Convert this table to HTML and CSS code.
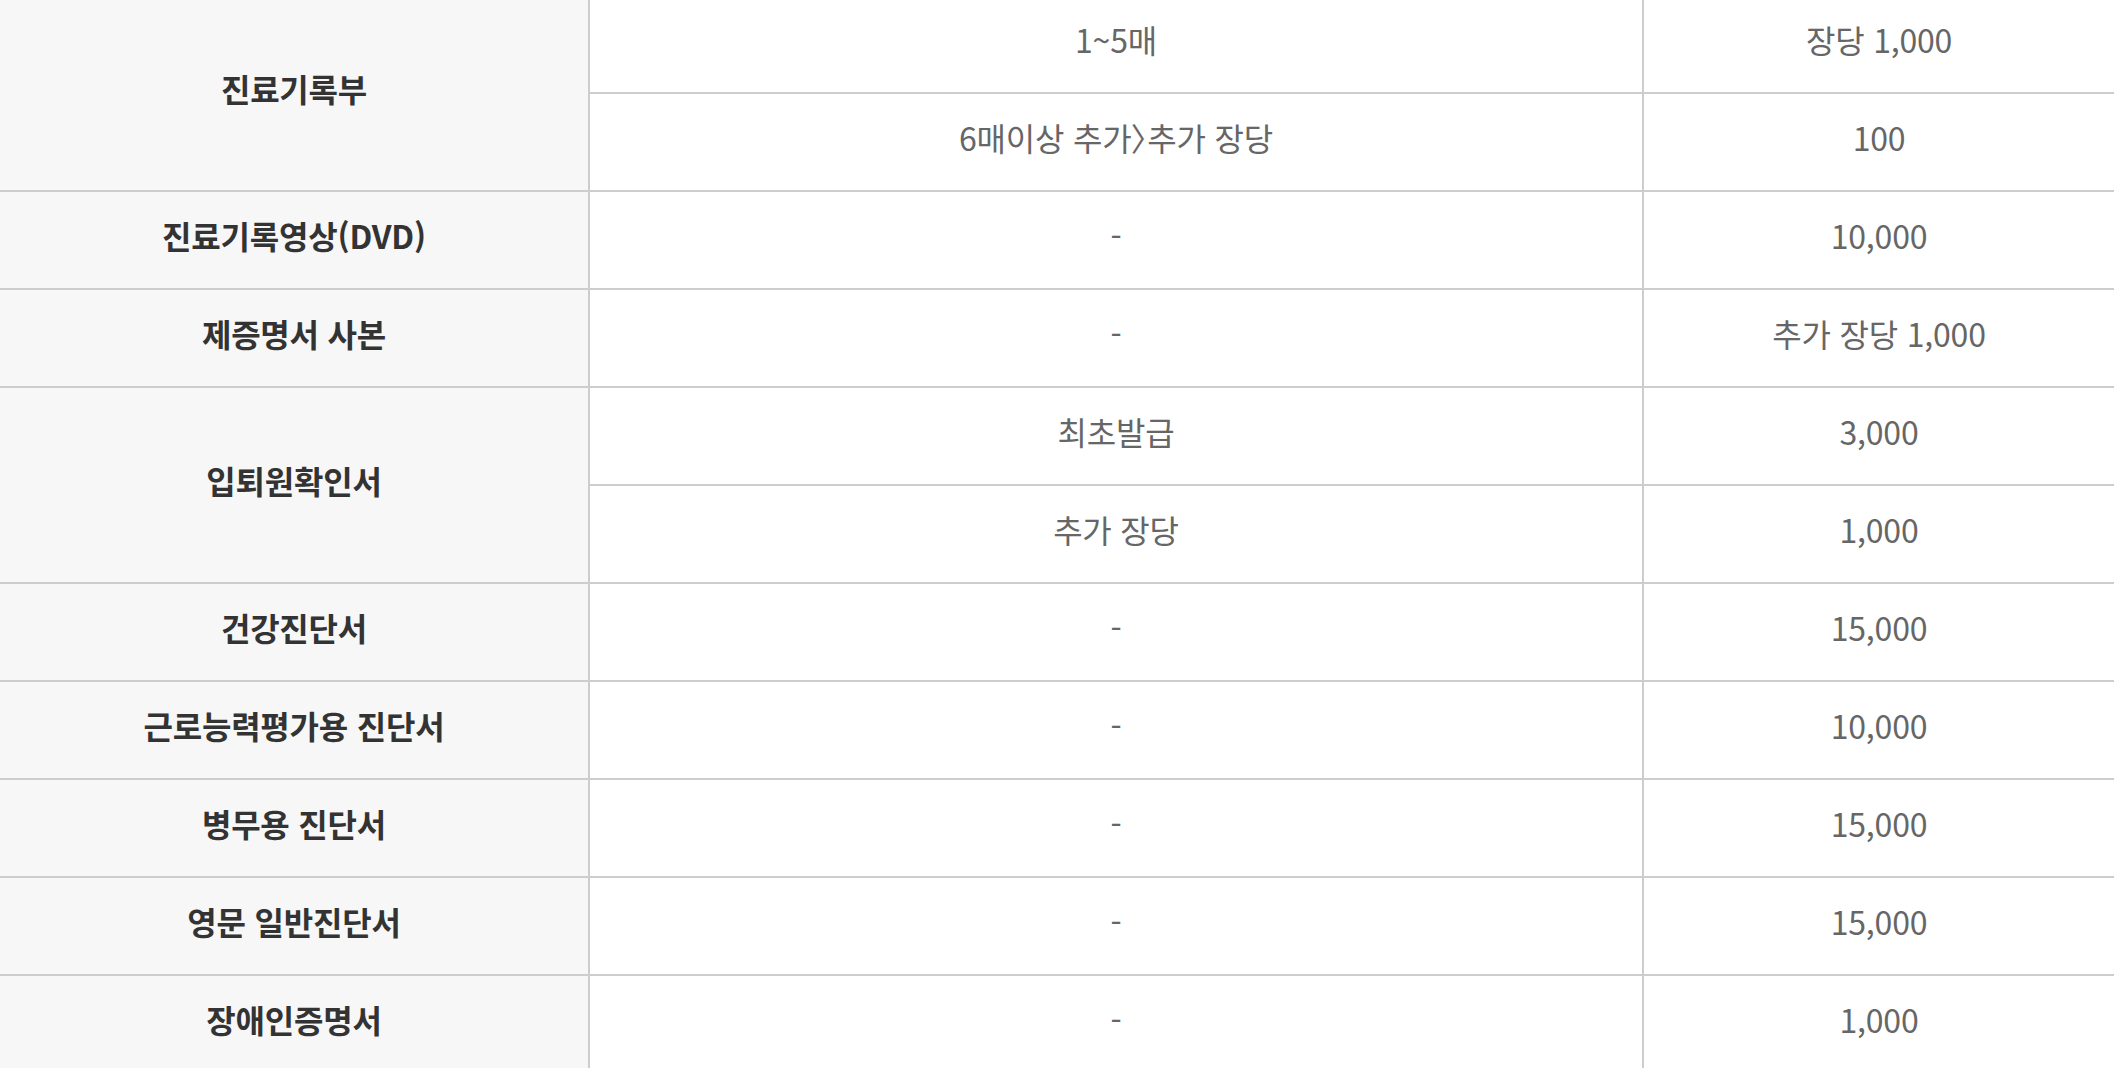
FILE: index.html
```html
<!DOCTYPE html>
<html lang="ko">
<head>
<meta charset="utf-8">
<title>제증명 수수료</title>
<link rel="stylesheet" href="styles.css">
</head>
<body>
<table class="fee-table">
  <colgroup>
    <col class="col-name">
    <col class="col-cond">
    <col class="col-price">
  </colgroup>
  <tbody>
    <tr>
      <th rowspan="2">진료기록부</th>
      <td class="cond">1~5매</td>
      <td class="price">장당 1,000</td>
    </tr>
    <tr>
      <td class="cond">6매이상 추가<span class="bracket">〉</span>추가 장당</td>
      <td class="price">100</td>
    </tr>
    <tr>
      <th>진료기록영상(DVD)</th>
      <td class="cond">-</td>
      <td class="price">10,000</td>
    </tr>
    <tr>
      <th>제증명서 사본</th>
      <td class="cond">-</td>
      <td class="price">추가 장당 1,000</td>
    </tr>
    <tr>
      <th rowspan="2">입퇴원확인서</th>
      <td class="cond">최초발급</td>
      <td class="price">3,000</td>
    </tr>
    <tr>
      <td class="cond">추가 장당</td>
      <td class="price">1,000</td>
    </tr>
    <tr>
      <th>건강진단서</th>
      <td class="cond">-</td>
      <td class="price">15,000</td>
    </tr>
    <tr>
      <th>근로능력평가용 진단서</th>
      <td class="cond">-</td>
      <td class="price">10,000</td>
    </tr>
    <tr>
      <th>병무용 진단서</th>
      <td class="cond">-</td>
      <td class="price">15,000</td>
    </tr>
    <tr>
      <th>영문 일반진단서</th>
      <td class="cond">-</td>
      <td class="price">15,000</td>
    </tr>
    <tr>
      <th>장애인증명서</th>
      <td class="cond">-</td>
      <td class="price">1,000</td>
    </tr>
  </tbody>
</table>
</body>
</html>
```

FILE: styles.css
```css
html, body {
  margin: 0;
  padding: 0;
  background: #ffffff;
}

body {
  overflow: hidden;
}

.fee-table {
  width: 2114px;
  margin-top: -4px;
  border-collapse: separate;
  border-spacing: 0;
  table-layout: fixed;
  font-family: "Noto Sans CJK KR", "Noto Sans", sans-serif;
  font-size: 32px;
  letter-spacing: -0.2px;
}

.col-name { width: 590px; }
.col-cond { width: 1054px; }
.col-price { width: 470px; }

.fee-table th,
.fee-table td {
  box-sizing: border-box;
  height: 98px;
  padding: 0 0 10px;
  text-align: center;
  vertical-align: middle;
  line-height: 1.4;
  border-bottom: 2px solid #cdcdcd;
}

.fee-table th {
  background: #f7f7f7;
  color: #333333;
  font-weight: 700;
  border-right: 2px solid #cdcdcd;
}

.fee-table td {
  color: #666666;
  font-weight: 400;
}

.fee-table td.cond {
  border-right: 2px solid #cdcdcd;
}

.bracket {
  font-feature-settings: "palt";
}
```
